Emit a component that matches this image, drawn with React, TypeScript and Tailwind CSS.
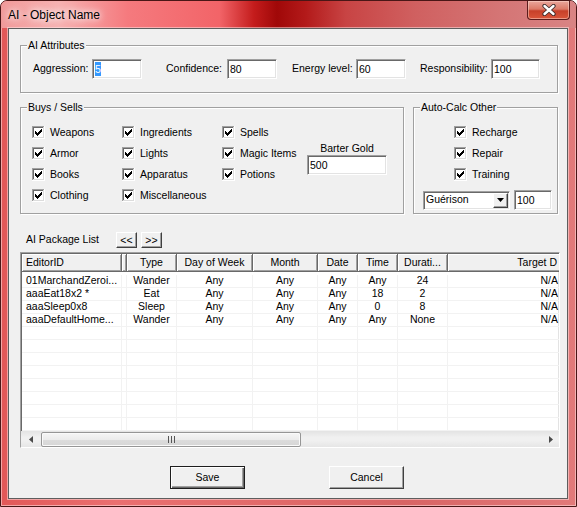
import clsx from "clsx";

const sunken =
  "bg-white border border-t-[#a0a0a0] border-l-[#a0a0a0] border-r-white border-b-white shadow-[inset_1px_1px_0_#696969,inset_-1px_-1px_0_#e3e3e3]";
const raised =
  "bg-[#f0f0f0] border border-t-white border-l-white border-r-[#404040] border-b-[#404040] shadow-[inset_-1px_-1px_0_#a0a0a0]";

function CheckBox({ label }: { label: string }) {
  const cols = [2, 3, 4, 3, 2, 1, 0];
  return (
    <div className="flex h-[21px] items-center gap-[5px] whitespace-nowrap">
      <svg width="13" height="13" viewBox="0 0 13 13" shapeRendering="crispEdges" className="shrink-0">
        <rect width="13" height="13" fill="#fff" />
        <rect x="0" y="0" width="12" height="1" fill="#a0a0a0" />
        <rect x="0" y="0" width="1" height="12" fill="#a0a0a0" />
        <rect x="1" y="1" width="10" height="1" fill="#696969" />
        <rect x="1" y="1" width="1" height="10" fill="#696969" />
        <rect x="11" y="1" width="1" height="11" fill="#dcdcdc" />
        <rect x="1" y="11" width="11" height="1" fill="#dcdcdc" />
        <rect x="12" y="0" width="1" height="13" fill="#fff" />
        <rect x="0" y="12" width="13" height="1" fill="#fff" />
        {cols.map((s, i) => (
          <rect key={i} x={3 + i} y={3 + s} width="1" height="3" fill="#000" />
        ))}
      </svg>
      <span>{label}</span>
    </div>
  );
}

function GroupBox({ title, className, children }: { title: string; className?: string; children?: React.ReactNode }) {
  return (
    <div className={clsx("relative border border-[#a0a0a0] shadow-[inset_1px_1px_0_#fff,1px_1px_0_#fff]", className)}>
      <span className="absolute -top-[8px] left-[6px] bg-[#f0f0f0] px-[1px] leading-[14px]">{title}</span>
      {children}
    </div>
  );
}

function Field({ value, className }: { value: React.ReactNode; className?: string }) {
  return <div className={clsx(sunken, "flex h-[20px] items-center pl-[2px] leading-[14px]", className)}>{value}</div>;
}

function Pair({ label, value, className }: { label: string; value: React.ReactNode; className: string }) {
  return (
    <div className={clsx("flex items-center justify-between", className)}>
      <span className="whitespace-nowrap">{label}</span>
      <Field value={value} className="w-[50px]" />
    </div>
  );
}

const cols = [
  { w: "w-[100px]", h: "EditorID", a: "left" },
  { w: "w-[4px]", h: "", a: "left" },
  { w: "w-[50px]", h: "Type", a: "center" },
  { w: "w-[76px]", h: "Day of Week", a: "center" },
  { w: "w-[65px]", h: "Month", a: "center" },
  { w: "w-[40px]", h: "Date", a: "center" },
  { w: "w-[40px]", h: "Time", a: "center" },
  { w: "w-[50px]", h: "Durati...", a: "center" },
  { w: "w-[113px]", h: "Target D", a: "right" },
];

const rows = [
  ["01MarchandZeroi...", "", "Wander", "Any", "Any", "Any", "Any", "24", "N/A"],
  ["aaaEat18x2 *", "", "Eat", "Any", "Any", "Any", "18", "2", "N/A"],
  ["aaaSleep0x8", "", "Sleep", "Any", "Any", "Any", "0", "8", "N/A"],
  ["aaaDefaultHome...", "", "Wander", "Any", "Any", "Any", "Any", "None", "N/A"],
];

function alignClass(a: string) {
  return a === "left" ? "justify-start pl-[4px]" : a === "right" ? "justify-end pr-[3px]" : "justify-center";
}

function PackageList() {
  const filled = [...rows, ...Array.from({ length: 9 }, () => Array(9).fill(""))];
  return (
    <div className={clsx(sunken, "mt-[4px] flex h-[196px] w-[540px] flex-col overflow-hidden")}>
      <div className="flex h-[19px] shrink-0 pt-[1px] pl-[1px]">
        {cols.map((c, i) => (
          <div
            key={i}
            className={clsx(
              c.w,
              alignClass(c.a),
              "flex h-full shrink-0 items-center overflow-hidden whitespace-nowrap bg-[#f0f0f0] border-r border-b border-r-[#696969] border-b-[#696969] shadow-[inset_1px_1px_0_#fff,inset_-1px_-1px_0_#a0a0a0]"
            )}
          >
            {c.h}
          </div>
        ))}
      </div>
      <div className="flex-1 overflow-hidden pt-[3px] pl-[1px]">
        {filled.map((r, ri) => (
          <div key={ri} className="flex h-[13px] border-b border-[#f2f2f2]">
            {cols.map((c, i) => (
              <div
                key={i}
                className={clsx(
                  c.w,
                  alignClass(c.a),
                  "flex shrink-0 items-end overflow-hidden whitespace-nowrap leading-[13px]",
                  i < cols.length - 1 && "border-r border-[#f2f2f2]"
                )}
              >
                {r[i]}
              </div>
            ))}
          </div>
        ))}
      </div>
      <div className="flex h-[16px] shrink-0 items-center bg-[linear-gradient(#e3e3e3,#f0f0f0_40%,#f0f0f0_60%,#e6e6e6)] pl-[1px]">
        <div className="flex h-full w-[17px] items-center justify-center">
          <svg width="4" height="7" viewBox="0 0 4 7">
            <path d="M4 0V7L0 3.5Z" fill="#4a4a4a" />
          </svg>
        </div>
        <div className="ml-[2px] flex h-[15px] w-[260px] items-center justify-center rounded-[2px] border border-[#969696] bg-[linear-gradient(#f6f6f6,#ececec_50%,#dcdcdc_51%,#d6d6d6)] shadow-[inset_0_0_0_1px_#fafafa]">
          <svg width="7" height="7" viewBox="0 0 7 7" shapeRendering="crispEdges">
            <rect x="0" y="0" width="1" height="7" fill="#555" />
            <rect x="3" y="0" width="1" height="7" fill="#555" />
            <rect x="6" y="0" width="1" height="7" fill="#555" />
          </svg>
        </div>
        <div className="flex-1" />
        <div className="flex h-full w-[17px] items-center justify-center">
          <svg width="4" height="7" viewBox="0 0 4 7">
            <path d="M0 0V7L4 3.5Z" fill="#4a4a4a" />
          </svg>
        </div>
      </div>
    </div>
  );
}

export default function App() {
  return (
    <div className="h-[507px] w-[577px] overflow-hidden font-['Liberation_Sans',Arial,sans-serif] text-[10.5px] text-black">
      <div className="flex h-full w-full flex-col rounded-t-[7px] border border-[#4a1616] bg-[linear-gradient(90deg,#e25858,#ea7070_20%,#e26a6a_45%,#d86464_70%,#e27a7a)] shadow-[inset_0_0_0_1px_rgba(255,220,220,0.6)]">
        <div className="flex h-[27px] shrink-0 items-start justify-between rounded-t-[6px] bg-[linear-gradient(90deg,#f09a9a_0%,#f6b2b2_10%,#f57a7e_22%,#f26468_38%,#c41c1c_44%,#a00808_48%,#b31a1a_53%,#c84444_60%,#d06060_72%,#d47474_86%,#d98484_100%)]">
          <span className="mt-[7px] ml-[7px] text-[12px] leading-[14px] [text-shadow:0_0_6px_#fff,0_0_10px_#fff]">
            AI - Object Name
          </span>
          <div className="mr-[6px] flex h-[19px] w-[43px] items-center justify-center rounded-b-[4px] border border-t-0 border-[#5a1c1c] bg-[linear-gradient(#eaa79c,#dc7a68_45%,#c7402a_55%,#d9553a)] shadow-[inset_0_0_0_1px_rgba(255,220,210,0.5)]">
            <svg width="14" height="12" viewBox="0 0 14 12">
              <path d="M2.5 2L11.5 10M11.5 2L2.5 10" stroke="#3b2a2a" strokeWidth="4.2" strokeLinecap="round" />
              <path d="M2.5 2L11.5 10M11.5 2L2.5 10" stroke="#fff" strokeWidth="2.4" strokeLinecap="round" />
            </svg>
          </div>
        </div>

        <div className="ml-[7px] mr-[8px] flex h-[471px] shrink-0 flex-col border border-[#5e5e5e] bg-[#f0f0f0] pl-[11px] shadow-[0_0_0_1px_rgba(255,235,235,0.5)]">
          <GroupBox title="AI Attributes" className="mt-[16px] flex h-[48px] w-[538px] shrink-0 items-center pl-[12px]">
            <Pair
              label="Aggression:"
              value={<span className="bg-[#3399ff] text-white">5</span>}
              className="w-[109px]"
            />
            <Pair label="Confidence:" value="80" className="ml-[24px] w-[111px]" />
            <Pair label="Energy level:" value="60" className="ml-[15px] w-[114px]" />
            <div className="ml-[14px] flex w-[120px] items-center justify-between">
              <span>Responsibility:</span>
              <Field value="100" className="w-[49px]" />
            </div>
          </GroupBox>

          <div className="mt-[14px] flex h-[107px] shrink-0">
            <GroupBox title="Buys / Sells" className="flex w-[384px] pt-[14px] pl-[11px]">
              <div className="flex w-[90px] flex-col">
                <CheckBox label="Weapons" />
                <CheckBox label="Armor" />
                <CheckBox label="Books" />
                <CheckBox label="Clothing" />
              </div>
              <div className="flex w-[100px] flex-col">
                <CheckBox label="Ingredients" />
                <CheckBox label="Lights" />
                <CheckBox label="Apparatus" />
                <CheckBox label="Miscellaneous" />
              </div>
              <div className="flex w-[85px] flex-col">
                <CheckBox label="Spells" />
                <CheckBox label="Magic Items" />
                <CheckBox label="Potions" />
              </div>
              <div className="mt-[19px] flex w-[80px] flex-col">
                <div className="h-[14px] text-center leading-[14px]">Barter Gold</div>
                <Field value="500" className="w-[80px]" />
              </div>
            </GroupBox>
            <GroupBox title="Auto-Calc Other" className="ml-[9px] flex w-[145px] flex-col pt-[14px] pl-[9px]">
              <div className="flex flex-col pl-[31px]">
                <CheckBox label="Recharge" />
                <CheckBox label="Repair" />
                <CheckBox label="Training" />
              </div>
              <div className="mt-[5px] flex items-center gap-[4px]">
                <div className={clsx(sunken, "flex h-[19px] w-[87px] items-center justify-between pl-[2px] pr-[1px]")}>
                  <span>Guérison</span>
                  <div className={clsx(raised, "flex h-[15px] w-[15px] items-center justify-center")}>
                    <svg width="7" height="4" viewBox="0 0 7 4">
                      <path d="M0 0H7L3.5 4Z" fill="#000" />
                    </svg>
                  </div>
                </div>
                <Field value="100" className="h-[19px] w-[38px]" />
              </div>
            </GroupBox>
          </div>

          <div className="mt-[18px] flex h-[16px] shrink-0 items-center">
            <span className="ml-[6px] w-[90px]">AI Package List</span>
            <div className={clsx(raised, "flex h-[16px] w-[21px] items-center justify-center leading-[12px]")}>&lt;&lt;</div>
            <div className={clsx(raised, "ml-[4px] flex h-[16px] w-[21px] items-center justify-center leading-[12px]")}>&gt;&gt;</div>
          </div>

          <PackageList />

          <div className="mt-[18px] flex w-[534px] shrink-0 justify-center gap-[84px]">
            <div className="flex h-[23px] w-[75px] items-center justify-center border border-[#1e1e1e] bg-[#f0f0f0] shadow-[inset_1px_1px_0_#fff,inset_-1px_-1px_0_#696969,inset_-2px_-2px_0_#a0a0a0]">
              Save
            </div>
            <div className={clsx(raised, "flex h-[23px] w-[75px] items-center justify-center")}>Cancel</div>
          </div>
        </div>
      </div>
    </div>
  );
}
